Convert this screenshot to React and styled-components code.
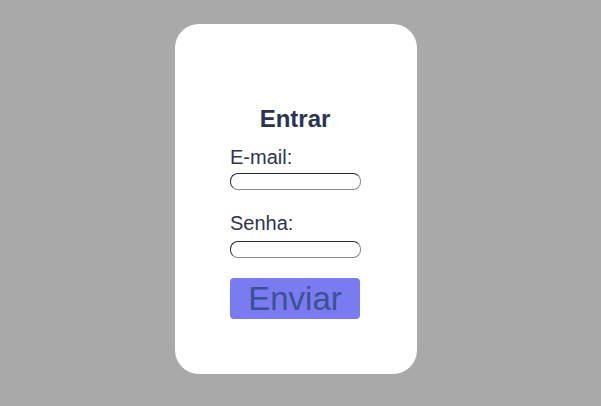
import React from 'react';
import styled, { createGlobalStyle } from 'styled-components';

const GlobalStyle = createGlobalStyle`
  html, body {
    margin: 0;
    padding: 0;
    background: #a9a9a9;
    font-family: "Liberation Sans", Arial, sans-serif;
  }
`;

const Page = styled.div`
  min-height: 406px;
  display: flex;
  justify-content: center;
  align-items: flex-start;
  padding: 24px 9px 0 0;
  box-sizing: border-box;
`;

const Card = styled.div`
  width: 242px;
  height: 350px;
  box-sizing: border-box;
  background: #ffffff;
  border-radius: 24px;
  padding: 81px 57px 0 55px;
  display: flex;
  flex-direction: column;
  color: #2c3450;
`;

const Title = styled.h2`
  margin: 0 0 13px;
  font-size: 24px;
  font-weight: bold;
  text-align: center;
  line-height: 28px;
`;

const Label = styled.label`
  display: block;
  font-size: 20px;
  line-height: 23px;
  margin-top: ${(p) => (p.$first ? '0' : '22px')};
`;

const Input = styled.input`
  display: block;
  width: 131px;
  height: 17px;
  box-sizing: border-box;
  margin-top: ${(p) => p.$gap || '4px'};
  padding: 0 6px;
  border: 1px solid;
  border-color: #2a2a2a #8a8a8a #8a8a8a #2a2a2a;
  border-radius: 8px;
  background: #fff;
  outline: none;
`;

const Button = styled.button`
  margin-top: 20px;
  width: 130px;
  height: 41px;
  padding: 0;
  border: none;
  border-radius: 4px;
  background: #7b7bf1;
  color: #3b5292;
  font-family: "Liberation Sans", Arial, sans-serif;
  font-size: 33px;
  line-height: 41px;
  cursor: pointer;
`;

export default function App() {
  return (
    <>
      <GlobalStyle />
      <Page>
        <Card>
          <Title>Entrar</Title>
          <Label $first htmlFor="email">E-mail:</Label>
          <Input id="email" type="email" />
          <Label htmlFor="senha">Senha:</Label>
          <Input id="senha" type="password" $gap="6px" />
          <Button type="submit">Enviar</Button>
        </Card>
      </Page>
    </>
  );
}
